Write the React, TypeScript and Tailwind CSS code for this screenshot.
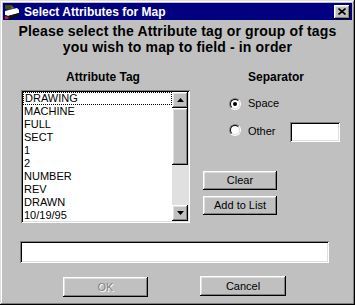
import React from "react";

const raised =
  "bg-[#c0c0c0] shadow-[inset_-1px_-1px_0_#000,inset_1px_1px_0_#fff,inset_-2px_-2px_0_#808080,inset_2px_2px_0_#dfdfdf]";
const sunken =
  "bg-white shadow-[inset_1px_1px_0_#808080,inset_-1px_-1px_0_#fff,inset_2px_2px_0_#000,inset_-2px_-2px_0_#dfdfdf]";

const tags = ["DRAWING", "MACHINE", "FULL", "SECT", "1", "2", "NUMBER", "REV", "DRAWN", "10/19/95"];

const TitleIcon = () => (
  <svg width="16" height="16" viewBox="0 0 16 16">
    <polygon points="1,1 8,1 10,4 6,6 1,5" fill="#3f4a14" />
    <polygon points="7,2 10,4 8,5" fill="#6b7d2a" />
    <polygon points="1,7 13,4 15,6 15,9 4,12 1,11" fill="#fff" />
    <polygon points="1,11 4,12 15,9 15,12 6,15 1,15" fill="#111" />
    <polygon points="1,12 5,13 4,15 1,15" fill="#c81e1e" />
  </svg>
);

const Arrow = ({ down }: { down?: boolean }) => (
  <svg width="7" height="4" viewBox="0 0 7 4">
    <polygon points={down ? "0,0 7,0 3.5,4" : "3.5,0 7,4 0,4"} fill="#000" />
  </svg>
);

const Radio = ({ checked }: { checked?: boolean }) => (
  <div className="w-[12px] h-[12px] rounded-full border border-t-[#808080] border-l-[#808080] border-r-white border-b-white">
    <div className="w-full h-full rounded-full border border-t-black border-l-black border-r-[#dfdfdf] border-b-[#dfdfdf] bg-white flex items-center justify-center">
      {checked && <div className="w-[4px] h-[4px] rounded-full bg-black" />}
    </div>
  </div>
);

const Button = ({ label, className, disabled }: { label: string; className: string; disabled?: boolean }) => (
  <div
    className={`${raised} ${className} flex items-center justify-center text-[11px] leading-[13px] ${
      disabled ? "text-[#808080] [text-shadow:1px_1px_0_#fff]" : "text-black"
    }`}
  >
    {label}
  </div>
);

export default function App() {
  return (
    <div className="w-[355px] h-[305px] bg-[#c0c0c0] p-[3px] overflow-hidden font-['Liberation_Sans',Arial,sans-serif] shadow-[inset_-1px_-1px_0_#000,inset_1px_1px_0_#dfdfdf,inset_-2px_-2px_0_#808080,inset_2px_2px_0_#fff]">
      {/* title bar */}
      <div className="h-[17px] bg-[#000080] flex items-center pl-[1px] pr-[2px]">
        <TitleIcon />
        <span className="ml-[4px] text-white font-bold text-[12px] leading-[14px]">Select Attributes for Map</span>
        <div className={`${raised} ml-auto w-[16px] h-[14px] flex items-center justify-center`}>
          <svg width="8" height="7" viewBox="0 0 8 7">
            <path d="M0.5 0.5 L7.5 6.5 M7.5 0.5 L0.5 6.5" stroke="#000" strokeWidth="1.6" />
          </svg>
        </div>
      </div>

      <div className="mt-[3px] text-center font-bold text-[14px] leading-[16px] tracking-[0.15px] text-black">
        <div>Please select the Attribute tag or group of tags</div>
        <div>you wish to map to field - in order</div>
      </div>

      <div className="mt-[15px] flex h-[153px]">
        {/* left column */}
        <div className="ml-[18px] w-[169px] flex flex-col">
          <div className="text-center font-bold text-[12px] leading-[14px] pr-[5px]">Attribute Tag</div>
          <div className={`${sunken} mt-[6px] h-[133px] p-[2px] flex`}>
            <div className="flex-1 overflow-hidden text-[11px] leading-[13px] text-black">
              {tags.map((t, i) => (
                <div
                  key={t}
                  className={`h-[13px] pl-[1px] ${i === 0 ? "border border-dotted border-black pl-0 leading-[11px]" : ""}`}
                >
                  {t}
                </div>
              ))}
            </div>
            <div className="w-[16px] flex flex-col bg-[#e0e0e0]">
              <div className={`${raised} h-[16px] flex items-center justify-center`}>
                <Arrow />
              </div>
              <div className={`${raised} h-[57px]`} />
              <div className="flex-1" />
              <div className={`${raised} h-[16px] flex items-center justify-center`}>
                <Arrow down />
              </div>
            </div>
          </div>
        </div>

        {/* right column */}
        <div className="flex-1 flex flex-col">
          <div className="ml-[58px] font-bold text-[12px] leading-[14px]">Separator</div>
          <div className="mt-[13px] ml-[39px] flex items-center h-[13px] text-[11px] leading-[13px]">
            <Radio checked />
            <span className="ml-[7px]">Space</span>
          </div>
          <div className="mt-[12px] ml-[39px] flex items-start text-[11px] leading-[13px]">
            <div className="mt-[2px]">
              <Radio />
            </div>
            <span className="ml-[7px] mt-[3px] w-[42px]">Other</span>
            <div className={`${sunken} w-[50px] h-[20px]`} />
          </div>
          <Button label="Clear" className="mt-[29px] ml-[13px] w-[74px] h-[19px]" />
          <Button label="Add to List" className="mt-[6px] ml-[13px] w-[74px] h-[19px]" />
        </div>
      </div>

      <div className={`${sunken} mt-[18px] ml-[17px] w-[309px] h-[22px]`} />

      <div className="mt-[13px] flex items-start">
        <Button label="OK" disabled className="ml-[60px] mt-[1px] w-[85px] h-[20px]" />
        <Button label="Cancel" className="ml-[52px] w-[86px] h-[20px]" />
      </div>
    </div>
  );
}
